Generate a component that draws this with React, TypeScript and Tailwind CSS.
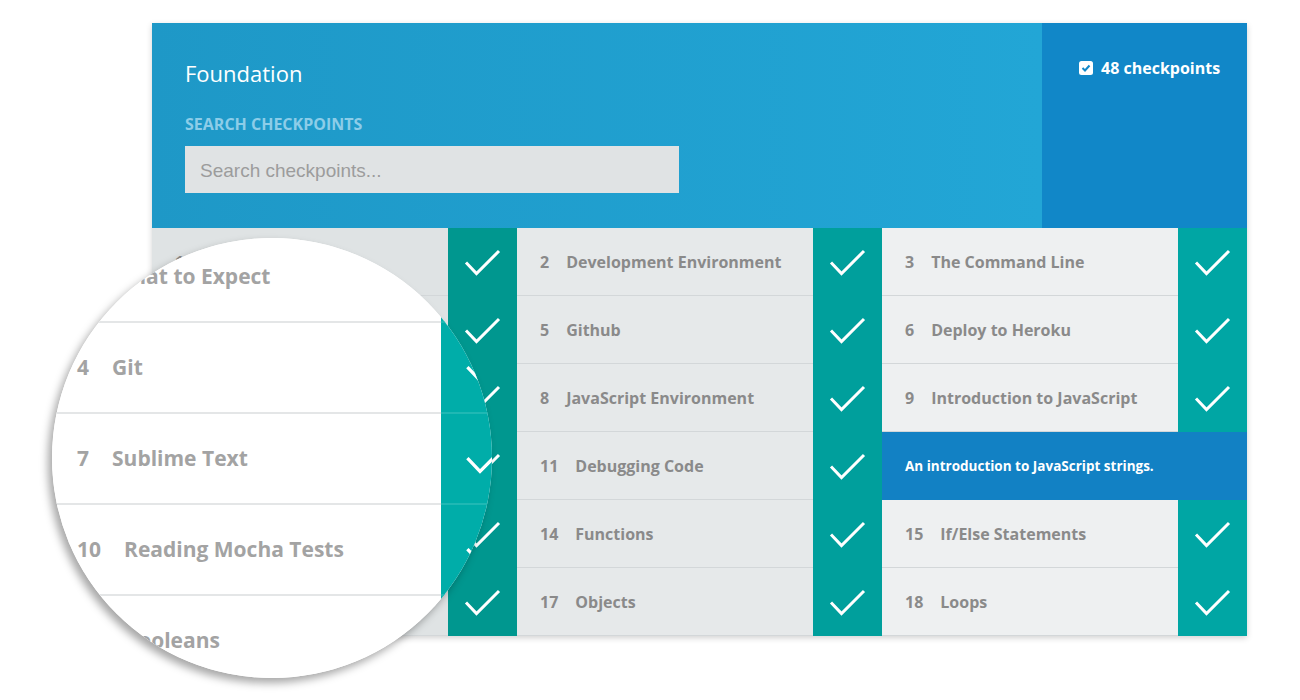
import React from 'react';

type Item = { n?: number; title: string; desc?: boolean };

const columns: Item[][] = [
  [
    { n: 1, title: 'What to Expect' },
    { n: 4, title: 'Git' },
    { n: 7, title: 'Sublime Text' },
    { n: 10, title: 'Reading Mocha Tests' },
    { n: 13, title: 'Booleans' },
    { n: 16, title: 'Arrays' },
  ],
  [
    { n: 2, title: 'Development Environment' },
    { n: 5, title: 'Github' },
    { n: 8, title: 'JavaScript Environment' },
    { n: 11, title: 'Debugging Code' },
    { n: 14, title: 'Functions' },
    { n: 17, title: 'Objects' },
  ],
  [
    { n: 3, title: 'The Command Line' },
    { n: 6, title: 'Deploy to Heroku' },
    { n: 9, title: 'Introduction to JavaScript' },
    { title: 'An introduction to JavaScript strings.', desc: true },
    { n: 15, title: 'If/Else Statements' },
    { n: 18, title: 'Loops' },
  ],
];

const cellBg = ['bg-[#dfe3e4]', 'bg-[#e6e9ea]', 'bg-[#eef0f1]'];
const tealBg = ['bg-[#00978f]', 'bg-[#009f9c]', 'bg-[#00a6a4]'];

const Tick: React.FC<{ size?: number }> = ({ size = 1 }) => (
  <svg width={37 * size} height={27 * size} viewBox="0 0 37 27" fill="none">
    <polyline points="2,13.5 12.5,24.5 35,2" stroke="white" strokeWidth={3 / Math.sqrt(size)} />
  </svg>
);

const CheckSquare: React.FC = () => (
  <svg width="14" height="14" viewBox="0 0 14 14">
    <rect x="0" y="0" width="14" height="14" rx="2.5" fill="white" />
    <polyline points="3.5,7 6,9.5 10.5,4.5" fill="none" stroke="#1187c8" strokeWidth="2" />
  </svg>
);

const Row: React.FC<{ item: Item; col: number }> = ({ item, col }) => {
  if (item.desc) {
    return (
      <div className="flex h-[68px] items-center bg-[#1281c4] pl-[23px] text-[13.5px] font-bold text-white">
        {item.title}
      </div>
    );
  }
  return (
    <div className="flex h-[68px]">
      <div
        className={`flex flex-1 items-center border-b border-[#d3d7d9] pl-[23px] text-[16px] font-bold text-[#8a8a8a] ${cellBg[col]}`}
      >
        <span className="mr-[17px]">{item.n}</span>
        <span>{item.title}</span>
      </div>
      <div className={`flex w-[69px] items-center justify-center ${tealBg[col]}`}>
        <Tick />
      </div>
    </div>
  );
};

// zoomed copy of the first column, ~1.34x
const Magnifier: React.FC = () => (
  <div className="absolute left-[52px] top-[238px] h-[440px] w-[440px] overflow-hidden rounded-full bg-white shadow-[-4px_5px_8px_rgba(0,0,0,0.35)]">
    <div className="absolute left-[-7px] top-[-6px] flex w-[488px] flex-col">
      {columns[0].slice(0, 5).map((item) => (
        <div key={item.n} className="flex h-[91px]">
          <div className="flex w-[396px] items-center border-b-2 border-[#e4e6e7] bg-white pl-[32px] text-[21px] font-bold text-[#a3a3a3]">
            <span className="mr-[23px]">{item.n}</span>
            <span>{item.title}</span>
          </div>
          <div className="flex w-[92px] items-center justify-center border-b-2 border-[#1fb8b4] bg-[#00ada9]">
            <Tick size={1.2} />
          </div>
        </div>
      ))}
    </div>
  </div>
);

export default function App() {
  return (
    <div
      className="relative h-[700px] w-[1300px] overflow-hidden bg-white pt-[23px]"
      style={{ fontFamily: '"Open Sans", "Noto Sans", sans-serif' }}
    >
      <div className="ml-[152px] w-[1095px] shadow-[0_2px_6px_rgba(0,0,0,0.18)]">
        <div className="flex h-[205px]">
          <div className="flex-1 bg-gradient-to-r from-[#1e98c7] to-[#22a6d6] px-[33px] pt-[35px]">
            <div className="text-[22px] leading-[30px] text-white">Foundation</div>
            <div className="mt-[26px] text-[16px] font-bold leading-[20px] text-[#8dcde8]">
              SEARCH CHECKPOINTS
            </div>
            <div
              className="mt-[12px] flex h-[47px] w-[494px] items-center bg-[#e0e3e4] pl-[15px] pt-[3px] text-[19px] text-[#9c9c9c]"
              style={{ fontFamily: '"Liberation Sans", Arial, sans-serif' }}
            >
              Search checkpoints...
            </div>
          </div>
          <div className="w-[205px] bg-[#1187c8] pl-[37px] pt-[35px]">
            <div className="flex items-center gap-[8px] text-[16px] font-bold leading-[20px] text-white">
              <CheckSquare />
              <span>48 checkpoints</span>
            </div>
          </div>
        </div>
        <div className="grid grid-cols-3">
          {columns.map((col, ci) => (
            <div key={ci} className="flex flex-col">
              {col.map((item, ri) => (
                <Row key={ri} item={item} col={ci} />
              ))}
            </div>
          ))}
        </div>
      </div>
      <Magnifier />
    </div>
  );
}
